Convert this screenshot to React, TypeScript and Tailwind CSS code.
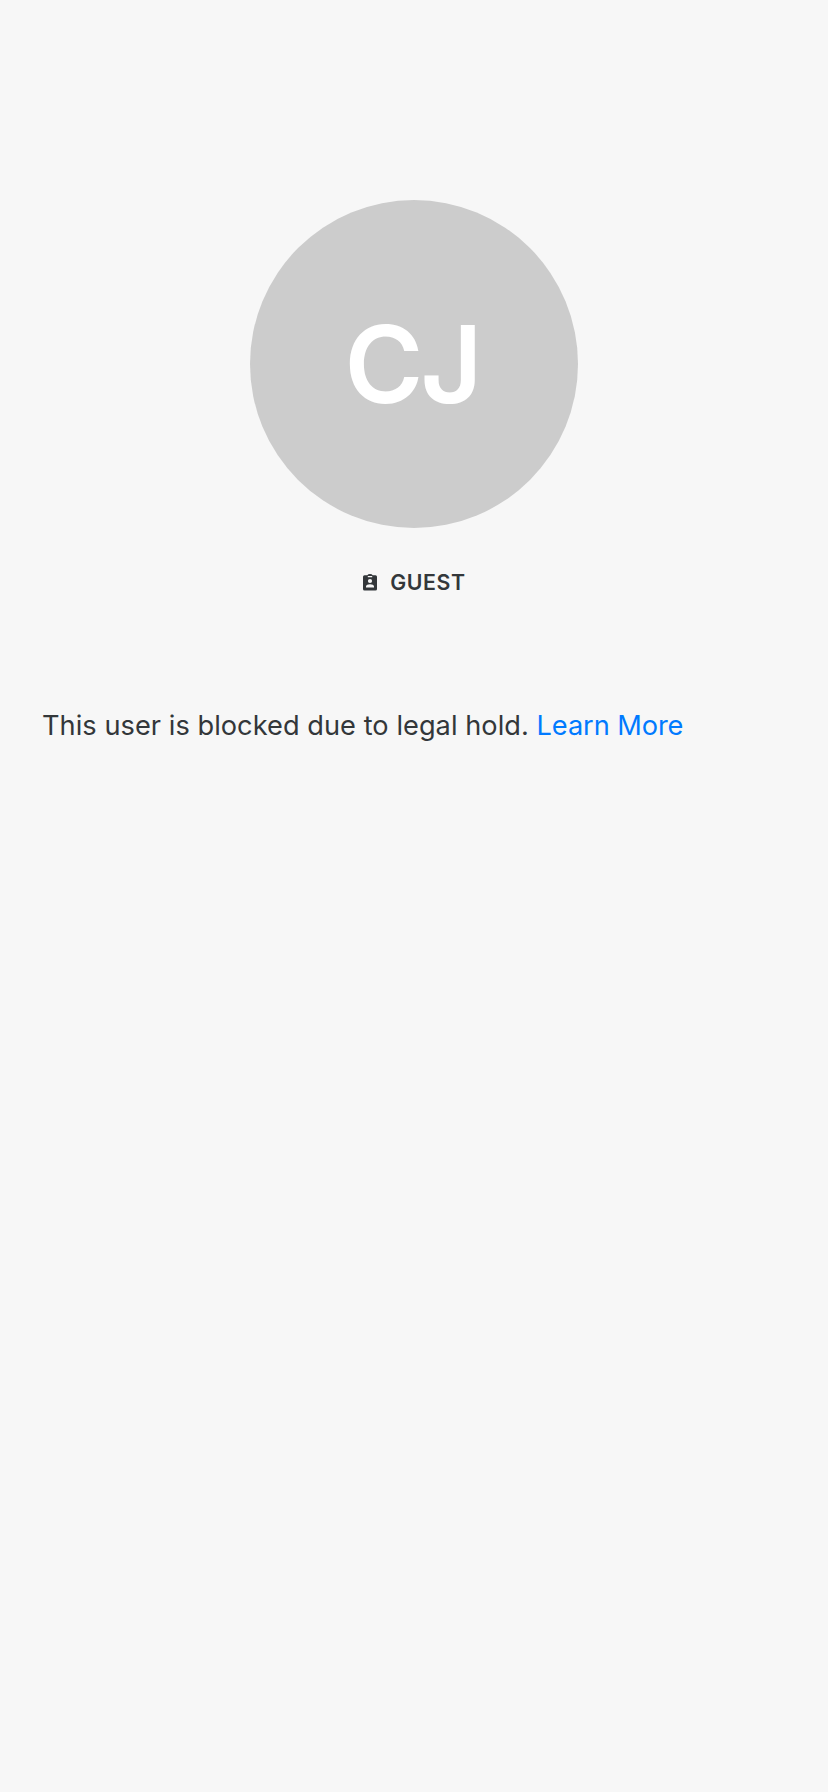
export default function App() {
  return (
    <main className="flex h-[1792px] w-[828px] flex-col items-center bg-[#f7f7f7] pt-[200px] font-['Inter',sans-serif] text-[#33373a]">
      <div className="flex size-[328px] items-center justify-center rounded-full bg-[#cccccc]">
        <span className="pr-[4px] text-[107px] leading-none font-semibold tracking-[-3px] text-white">CJ</span>
      </div>
      <div className="mt-[42px] flex h-6 items-center gap-[13px] pl-px">
        <svg viewBox="0 0 14 17" className="h-[17px] w-[14px]" fill="currentColor">
          <path
            fillRule="evenodd"
            d="M1.500 1.200H4.300Q5 0 7 0T9.700 1.200H12.500A1.500 1.500 0 0 1 14 2.700V15a1.500 1.500 0 0 1-1.500 1.500H1.500A1.500 1.500 0 0 1 0 15V2.700A1.500 1.500 0 0 1 1.500 1.200ZM4.800 2.100V3.200H9.200V2.100ZM7 4.900A2.100 2.100 0 1 0 7 9.100A2.100 2.100 0 0 0 7 4.900ZM3 13.600H11V12.400C11 11 9 10.300 7 10.300S3 11 3 12.400Z"
          />
        </svg>
        <span className="text-[21.3px] leading-6 font-semibold tracking-[0.6px]">GUEST</span>
      </div>
      <p className="mt-[114px] w-full px-[42px] text-[27.2px] leading-9 tracking-[0.04px]">
        This user is blocked due to legal hold. <a className="tracking-[-0.08px] text-[#007aff]">Learn More</a>
      </p>
    </main>
  );
}
